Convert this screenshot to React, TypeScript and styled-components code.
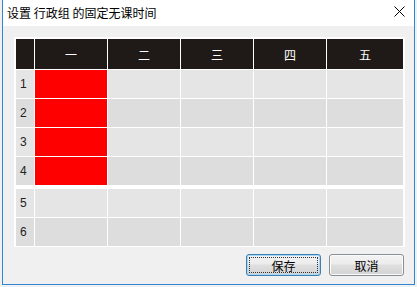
import React from "react";
import styled, { createGlobalStyle } from "styled-components";

const Global = createGlobalStyle`
  html, body { margin: 0; padding: 0; background: #f0f0f0; }
  body { font-family: "Noto Sans CJK SC", "Liberation Sans", sans-serif; }
`;

const Window = styled.div`
  margin-left: 2px;
  width: 413px;
  height: 285px;
  box-sizing: border-box;
  border: 1px solid #2f86d2;
  border-top: none;
  display: flex;
  flex-direction: column;
  background: #f0f0f0;
`;

const TitleBar = styled.div`
  height: 26px;
  flex: none;
  background: #ffffff;
  display: flex;
  align-items: center;
  justify-content: space-between;
  padding: 0 9px 0 4px;
`;

const Title = styled.span`
  font-size: 12px;
  color: #000;
  line-height: 1;
  margin-top: -1px;
`;

const CloseBtn = styled.span`
  display: flex;
  width: 11px;
  height: 11px;
  margin-top: -3px;
`;

const Client = styled.div`
  flex: 1;
  display: flex;
  flex-direction: column;
  padding: 11px 9px 0 11px;
`;

const Table = styled.div`
  background: #ffffff;
  padding: 2px 2px 1px 2px;
  display: flex;
  flex-direction: column;
  gap: 1px;
`;

const Row = styled.div<{ $split?: boolean; $head?: boolean }>`
  display: grid;
  grid-template-columns: 18px repeat(4, 72px) 76px;
  column-gap: 1px;
  height: ${(p) => (p.$head ? "30px" : "28px")};
  margin-top: ${(p) => (p.$split ? "3px" : "0")};
`;

const HeadCell = styled.div`
  background: #1f1a17;
  color: #ffffff;
  font-size: 12px;
  display: flex;
  align-items: center;
  justify-content: center;
`;

const NumCell = styled.div<{ $alt: boolean }>`
  background: ${(p) => (p.$alt ? "#dddddd" : "#e5e5e5")};
  color: #222;
  font-family: "Liberation Sans", sans-serif;
  font-size: 12px;
  display: flex;
  align-items: center;
  padding-left: 4px;
`;

const Cell = styled.div<{ $alt: boolean; $on: boolean }>`
  background: ${(p) => (p.$on ? "#ff0000" : p.$alt ? "#dddddd" : "#e5e5e5")};
`;

const Footer = styled.div`
  display: flex;
  justify-content: flex-end;
  gap: 8px;
  margin-top: 7px;
  padding-right: 1px;
`;

const Button = styled.button<{ $default?: boolean }>`
  width: 75px;
  height: 22px;
  box-sizing: border-box;
  border-radius: 3px;
  border: 1px solid ${(p) => (p.$default ? "#3c7fb1" : "#8a8f94")};
  background: linear-gradient(#f3f3f3 0%, #ececec 45%, #dfdfdf 50%, #d3d3d3 100%);
  font-family: "Noto Sans CJK SC", sans-serif;
  font-size: 12px;
  color: #000;
  padding: 0;
  position: relative;
  display: flex;
  align-items: center;
  justify-content: center;
  box-shadow: ${(p) => (p.$default ? "inset 0 0 0 1px #a6d6f5" : "inset 0 0 0 1px #fbfbfb")};
`;

const Focus = styled.span`
  position: absolute;
  inset: 2px;
  border: 1px dotted #333;
  pointer-events: none;
`;

const days = ["一", "二", "三", "四", "五"];
const rows = [1, 2, 3, 4, 5, 6];

export default function App() {
  return (
    <>
      <Global />
      <Window>
        <TitleBar>
          <Title>设置 行政组 的固定无课时间</Title>
          <CloseBtn>
            <svg width="11" height="11" viewBox="0 0 11 11">
              <path d="M0.5 0.5 L10.5 10.5 M10.5 0.5 L0.5 10.5" stroke="#000" strokeWidth="1" fill="none" />
            </svg>
          </CloseBtn>
        </TitleBar>
        <Client>
          <Table>
            <Row $head>
              <HeadCell />
              {days.map((d) => (
                <HeadCell key={d}>{d}</HeadCell>
              ))}
            </Row>
            {rows.map((r) => (
              <Row key={r} $split={r === 5}>
                <NumCell $alt={r % 2 === 0}>{r}</NumCell>
                {days.map((d, i) => (
                  <Cell key={d} $alt={r % 2 === 0} $on={i === 0 && r <= 4} />
                ))}
              </Row>
            ))}
          </Table>
          <Footer>
            <Button $default>
              <Focus />
              保存
            </Button>
            <Button>取消</Button>
          </Footer>
        </Client>
      </Window>
    </>
  );
}
